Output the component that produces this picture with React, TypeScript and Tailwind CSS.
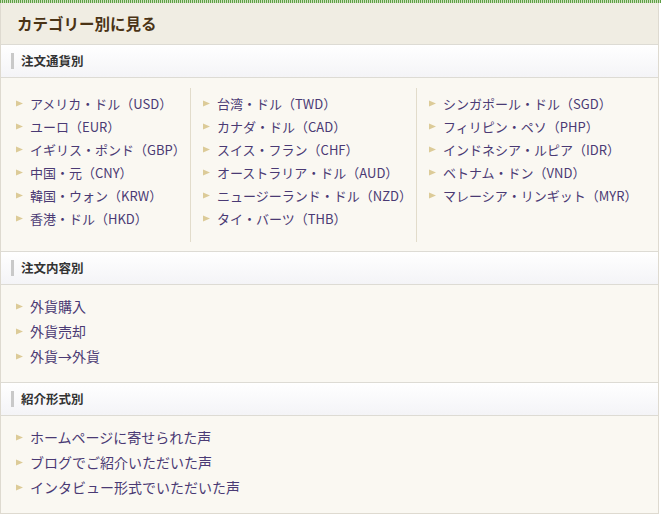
import React from 'react';

const font = { fontFamily: '"Noto Sans CJK JP", "Noto Sans", sans-serif' };

const currencyCols: string[][] = [
  ['アメリカ・ドル（USD）', 'ユーロ（EUR）', 'イギリス・ポンド（GBP）', '中国・元（CNY）', '韓国・ウォン（KRW）', '香港・ドル（HKD）'],
  ['台湾・ドル（TWD）', 'カナダ・ドル（CAD）', 'スイス・フラン（CHF）', 'オーストラリア・ドル（AUD）', 'ニュージーランド・ドル（NZD）', 'タイ・バーツ（THB）'],
  ['シンガポール・ドル（SGD）', 'フィリピン・ペソ（PHP）', 'インドネシア・ルピア（IDR）', 'ベトナム・ドン（VND）', 'マレーシア・リンギット（MYR）'],
];

const Arrow = () => (
  <svg width="7" height="7" viewBox="0 0 7 7" className="shrink-0">
    <path d="M0 0.5 L7 3.5 L0 6.5 Z" fill="#dccb98" />
  </svg>
);

const Item = ({ label, h, size }: { label: string; h: string; size: string }) => (
  <li className={`flex items-center gap-[7px] ${h}`}>
    <Arrow />
    <a className={`${size} text-[#4a3a74] whitespace-nowrap`}>{label}</a>
  </li>
);

const SectionHeader = ({ title }: { title: string }) => (
  <div className="h-[34px] flex items-center gap-[7px] px-[10px] bg-gradient-to-b from-white to-[#f4f4f7] border-y border-[#dddbd4]">
    <span className="w-[3px] h-[16px] bg-[#c9c9c9]" />
    <h3 className="text-[12.5px] font-bold text-[#333]">{title}</h3>
  </div>
);

export default function App() {
  return (
    <div className="w-[661px] h-[517px] bg-white" style={font}>
      <div className="h-[3px] bg-[repeating-linear-gradient(90deg,#5f9e45_0_1px,#cde3bf_1px_2px)]" />
      <div className="w-[659px] border-x border-b border-[#dedad0]">
        <div className="h-[41px] bg-[#f0ede3] flex items-center px-[16px]">
          <h2 className="text-[15.5px] font-bold text-[#4a3315]">カテゴリー別に見る</h2>
        </div>

        <SectionHeader title="注文通貨別" />
        <div className="bg-[#faf8f2] pt-[10px] pb-[9px] grid grid-cols-[189px_226px_1fr]">
          {currencyCols.map((col, i) => (
            <ul key={i} className={`pt-[4px] pb-[12px] min-h-[153px] ${i > 0 ? 'border-l border-[#e2dccb] pl-[12px]' : 'pl-[15px]'}`}>
              {col.map((c) => (
                <Item key={c} label={c} h="h-[23px]" size="text-[13px]" />
              ))}
            </ul>
          ))}
        </div>

        <SectionHeader title="注文内容別" />
        <ul className="bg-[#faf8f2] pt-[9px] pb-[13px] pl-[15px]">
          {['外貨購入', '外貨売却', '外貨→外貨'].map((c) => (
            <Item key={c} label={c} h="h-[25px]" size="text-[14px]" />
          ))}
        </ul>

        <SectionHeader title="紹介形式別" />
        <ul className="bg-[#faf8f2] pt-[9px] pb-[13px] pl-[15px]">
          {['ホームページに寄せられた声', 'ブログでご紹介いただいた声', 'インタビュー形式でいただいた声'].map((c) => (
            <Item key={c} label={c} h="h-[25px]" size="text-[14px]" />
          ))}
        </ul>
      </div>
    </div>
  );
}
